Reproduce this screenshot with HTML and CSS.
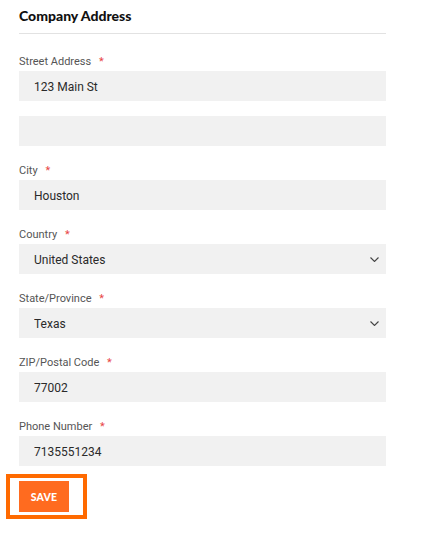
FILE: index.html
```html
<!DOCTYPE html>
<html lang="en">
<head>
<meta charset="utf-8">
<title>Company Address</title>
<link rel="stylesheet" href="styles.css">
</head>
<body>
<form class="panel">
  <h2 class="title">Company Address</h2>

  <div class="field">
    <label class="label">Street Address <span class="req">*</span></label>
    <input class="input" type="text" value="123 Main St">
    <input class="input line2" type="text" value="">
  </div>

  <div class="field">
    <label class="label">City <span class="req">*</span></label>
    <input class="input" type="text" value="Houston">
  </div>

  <div class="field">
    <label class="label">Country <span class="req">*</span></label>
    <div class="select-wrap">
      <select class="input select"><option>United States</option></select>
      <svg class="chev" width="9" height="5" viewBox="0 0 9 5"><path d="M0.5 0.5 L4.5 4.5 L8.5 0.5" fill="none" stroke="#444" stroke-width="1.1"/></svg>
    </div>
  </div>

  <div class="field">
    <label class="label">State/Province <span class="req">*</span></label>
    <div class="select-wrap">
      <select class="input select"><option>Texas</option></select>
      <svg class="chev" width="9" height="5" viewBox="0 0 9 5"><path d="M0.5 0.5 L4.5 4.5 L8.5 0.5" fill="none" stroke="#444" stroke-width="1.1"/></svg>
    </div>
  </div>

  <div class="field">
    <label class="label">ZIP/Postal Code <span class="req">*</span></label>
    <input class="input" type="text" value="77002">
  </div>

  <div class="field">
    <label class="label">Phone Number <span class="req">*</span></label>
    <input class="input" type="text" value="7135551234">
  </div>

  <div class="actions">
    <button class="save" type="button">SAVE</button>
  </div>
</form>
</body>
</html>
```

FILE: styles.css
```css
* { box-sizing: border-box; }
html, body { margin: 0; padding: 0; background: #fff; }
body { font-family: Roboto, "Noto Sans", Arial, sans-serif; color: #222; }

.panel {
  width: 386px;
  padding: 6px 0 34px 19px;
}

.title {
  margin: 0;
  font-family: Lato, Inter, sans-serif;
  font-weight: 900;
  font-size: 14px;
  line-height: 20px;
  color: #111;
  padding-bottom: 7px;
  border-bottom: 1px solid #e2e2e2;
  margin-bottom: 19px;
}

.field { margin-bottom: 16px; }

.label {
  display: block;
  font-size: 11px;
  line-height: 16px;
  padding-top: 1px;
  color: #555;
  margin-bottom: 1px;
}
.req { color: #e84545; margin-left: 5px; }

.input {
  display: block;
  width: 100%;
  height: 30px;
  border: 0;
  border-radius: 0;
  background: #f1f1f1;
  padding: 2px 15px 0;
  font-family: Roboto, "Noto Sans", Arial, sans-serif;
  font-size: 12px;
  color: #2a2a2a;
  outline: none;
}
.line2 { margin-top: 15px; }

.select-wrap { position: relative; }
.select { appearance: none; -webkit-appearance: none; }
.chev { position: absolute; right: 7px; top: 13px; pointer-events: none; }

.actions { position: relative; display: flex; width: 50px; margin-top: -1px; }
.actions::after {
  content: "";
  position: absolute;
  left: -13px; top: -7px; right: -18px; bottom: -7px;
  border: 4px solid #ff6a00;
  pointer-events: none;
}
.save {
  display: block;
  width: 50px;
  height: 31px;
  border: 0;
  background: #ff6b1f;
  color: #fff;
  font-family: Lato, Inter, sans-serif;
  font-weight: 900;
  font-size: 10.5px;
  letter-spacing: 0.2px;
  padding: 0;
}
```
